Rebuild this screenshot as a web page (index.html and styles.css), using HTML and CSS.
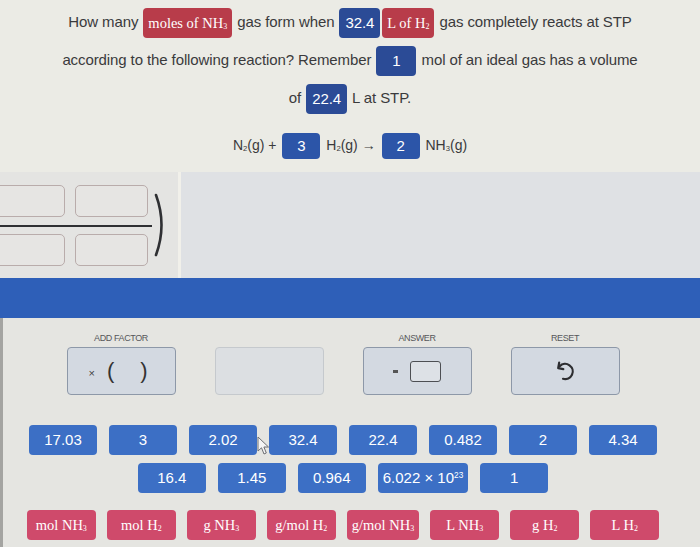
FILE: index.html
```html
<!DOCTYPE html>
<html>
<head>
<meta charset="utf-8">
<title>Conversion</title>
<link rel="stylesheet" href="styles.css">
</head>
<body>
<div class="page">
  <section class="question">
    <p class="q-line">How many <span class="chip chip-red">moles of NH<sub>3</sub></span> gas form when <span class="chip chip-navy">32.4</span><span class="chip chip-red">L of H<sub>2</sub></span> gas completely reacts at STP</p>
    <p class="q-line">according to the following reaction? Remember <span class="chip chip-navy">1</span> mol of an ideal gas has a volume</p>
    <p class="q-line">of <span class="chip chip-navy">22.4</span> L at STP.</p>
    <div class="equation">N<sub>2</sub>(g) + <span class="chip-eq">3</span> H<sub>2</sub>(g) → <span class="chip-eq">2</span> NH<sub>3</sub>(g)</div>
  </section>

  <section class="workspace">
    <div class="frac-col">
      <div class="frac">
        <div class="frac-row"><div class="slot"></div><div class="slot"></div></div>
        <div class="frac-line"></div>
        <div class="frac-row"><div class="slot"></div><div class="slot"></div></div>
      </div>
      <svg class="paren" width="16" height="64" viewBox="0 0 16 64"><path d="M4 2 Q15 32 4 62" fill="none" stroke="#2f3033" stroke-width="2.6" stroke-linecap="round"/></svg>
    </div>
    <div class="divider"></div>
    <div class="work-right"></div>
  </section>

  <div class="band"></div>

  <section class="tools">
    <div class="tool-row">
      <div class="tool">
        <div class="tool-label">ADD FACTOR</div>
        <div class="tool-box"><span class="times">×</span><span class="par">(</span><span class="par par-r">)</span></div>
      </div>
      <div class="tool">
        <div class="tool-label"></div>
        <div class="tool-box tool-box-empty"></div>
      </div>
      <div class="tool">
        <div class="tool-label">ANSWER</div>
        <div class="tool-box"><span class="eq-mark"></span><span class="ans-slot"></span></div>
      </div>
      <div class="tool">
        <div class="tool-label">RESET</div>
        <div class="tool-box">
          <svg width="26" height="28" viewBox="0 0 26 28"><path d="M7.7 9.2 A7.6 7.6 0 1 1 11 21.8" fill="none" stroke="#2c2d30" stroke-width="2.2" stroke-linecap="round"/><polyline points="6.2 5.6 6.2 11.2 11.4 11.2" fill="none" stroke="#2c2d30" stroke-width="2.2" stroke-linecap="round" stroke-linejoin="round" transform="rotate(10 6.2 11.2)"/></svg>
        </div>
      </div>
    </div>

    <div class="num-row">
      <span class="num">17.03</span><span class="num">3</span><span class="num">2.02</span><span class="num">32.4</span><span class="num">22.4</span><span class="num">0.482</span><span class="num">2</span><span class="num">4.34</span>
    </div>
    <div class="num-row num-row-2">
      <span class="num">16.4</span><span class="num">1.45</span><span class="num">0.964</span><span class="num">6.022 × 10<sup>23</sup></span><span class="num">1</span>
    </div>
    <div class="unit-row">
      <span class="unit">mol NH<sub>3</sub></span><span class="unit">mol H<sub>2</sub></span><span class="unit">g NH<sub>3</sub></span><span class="unit">g/mol H<sub>2</sub></span><span class="unit">g/mol NH<sub>3</sub></span><span class="unit">L NH<sub>3</sub></span><span class="unit">g H<sub>2</sub></span><span class="unit">L H<sub>2</sub></span>
    </div>

    <svg class="cursor" width="13" height="20" viewBox="0 0 13 20"><path d="M1 1 L1 15 L4.5 11.8 L7 18 L9.3 17 L6.9 11 L11.5 11 Z" fill="#f4f4f4" stroke="#6d6f73" stroke-width="1" stroke-linejoin="round"/></svg>
  </section>
</div>
</body>
</html>
```

FILE: styles.css
```css
* { box-sizing: border-box; }

html, body {
  margin: 0;
  padding: 0;
}

body {
  width: 700px;
  height: 547px;
  overflow: hidden;
  font-family: "Liberation Sans", Arial, sans-serif;
  color: #3a3a3c;
  background: #e5e5e1;
}

.page {
  width: 700px;
  height: 547px;
  display: flex;
  flex-direction: column;
}

/* ---------- question ---------- */
.question {
  background: #ebebe5;
  padding: 3px 0 12px;
  height: 172px;
}

.q-line {
  margin: 0;
  height: 38px;
  line-height: 38px;
  text-align: center;
  font-size: 15px;
  letter-spacing: -0.1px;
  white-space: nowrap;
}

.chip {
  display: inline-block;
  height: 30px;
  line-height: 30px;
  min-width: 40px;
  padding: 0 6px;
  margin: 0 1px;
  border-radius: 4px;
  color: #fff;
  text-align: center;
  vertical-align: middle;
}

.chip-red {
  background: #b83c4a;
  font-family: "Liberation Serif", "Times New Roman", serif;
  font-size: 14.5px;
  letter-spacing: 0;
  padding: 0 5px;
}

.chip-navy {
  background: #2b4b96;
  font-size: 15px;
}

.chip sub, .equation sub, .unit sub {
  font-size: 0.55em;
  vertical-align: -0.1em;
}

.equation {
  margin-top: 13px;
  height: 30px;
  line-height: 30px;
  text-align: center;
  font-size: 14px;
  white-space: nowrap;
}

.chip-eq {
  display: inline-block;
  width: 38px;
  height: 26px;
  line-height: 26px;
  margin: 0 2px;
  border-radius: 4px;
  background: #2c55a8;
  color: #fff;
  font-size: 15px;
  text-align: center;
  vertical-align: middle;
}

/* ---------- workspace ---------- */
.workspace {
  height: 106px;
  display: flex;
  background: #dfe1e4;
}

.frac-col {
  width: 178px;
  flex: none;
  display: flex;
  justify-content: flex-end;
  align-items: center;
  padding-right: 10px;
  overflow: hidden;
  background: #e4e4e2;
}

.frac {
  width: 152px;
  flex: none;
  display: flex;
  flex-direction: column;
}

.frac-row {
  display: flex;
  justify-content: flex-end;
  gap: 10px;
  padding-right: 4px;
}

.slot {
  width: 73px;
  height: 32px;
  flex: none;
  border: 1px solid #b9acab;
  border-radius: 5px;
  background: #e6e5e3;
}

.frac-line {
  height: 2px;
  margin: 8px 0 7px;
  background: #2f3033;
}

.paren {
  flex: none;
}

.divider {
  width: 3px;
  flex: none;
  background: #f1f0ea;
}

.work-right {
  flex: 1;
  background: #dfe1e4;
}

.band {
  height: 40px;
  flex: none;
  background: #2e5fb8;
}

/* ---------- tools ---------- */
.tools {
  position: relative;
  flex: 1;
  padding: 14px 14px 0 0;
  background: #e5e5e1;
  box-shadow: inset 3px 0 0 #a4a4a1;
}

.tool-row {
  display: flex;
  justify-content: center;
  gap: 39px;
}

.tool {
  width: 109px;
  display: flex;
  flex-direction: column;
  align-items: center;
}

.tool-label {
  height: 12px;
  line-height: 12px;
  margin-bottom: 3px;
  font-size: 9px;
  letter-spacing: -0.4px;
  color: #55575a;
}

.tool-box {
  width: 109px;
  height: 48px;
  display: flex;
  align-items: center;
  justify-content: center;
  border: 1px solid #8d98a8;
  border-radius: 4px;
  background: #d3d9e1;
}

.tool-box-empty {
  border-color: #c5c9cd;
  background: #dcdfe2;
}

.times {
  font-size: 11px;
  color: #444;
  margin-right: 12px;
  margin-left: -6px;
  margin-top: 4px;
}

.par {
  font-size: 22px;
  color: #333;
  line-height: 1;
}

.par-r {
  margin-left: 26px;
}

.eq-mark {
  width: 5px;
  height: 3px;
  background: #555;
  margin-right: 12px;
}

.ans-slot {
  width: 31px;
  height: 21px;
  border: 1.5px solid #4d4f53;
  border-radius: 3px;
  background: #dde1e6;
}

.num-row {
  display: flex;
  justify-content: center;
  gap: 12px;
  margin-top: 30px;
}

.num-row-2 {
  margin-top: 8px;
}

.num {
  min-width: 68px;
  height: 30px;
  line-height: 30px;
  padding: 0 5px;
  border-radius: 4px;
  background: #3c6fc5;
  color: #fff;
  font-size: 15px;
  text-align: center;
  white-space: nowrap;
}

.num sup {
  font-size: 0.55em;
  vertical-align: 0.6em;
  line-height: 0;
}

.unit-row {
  display: flex;
  justify-content: center;
  gap: 11px;
  margin-top: 17px;
}

.unit {
  min-width: 69px;
  height: 30px;
  line-height: 30px;
  padding: 0 5px;
  border-radius: 4px;
  background: #cf4a6b;
  color: #fff;
  font-family: "Liberation Serif", "Times New Roman", serif;
  font-size: 14.5px;
  text-align: center;
  white-space: nowrap;
}

.cursor {
  position: absolute;
  left: 257px;
  top: 118px;
}
```
